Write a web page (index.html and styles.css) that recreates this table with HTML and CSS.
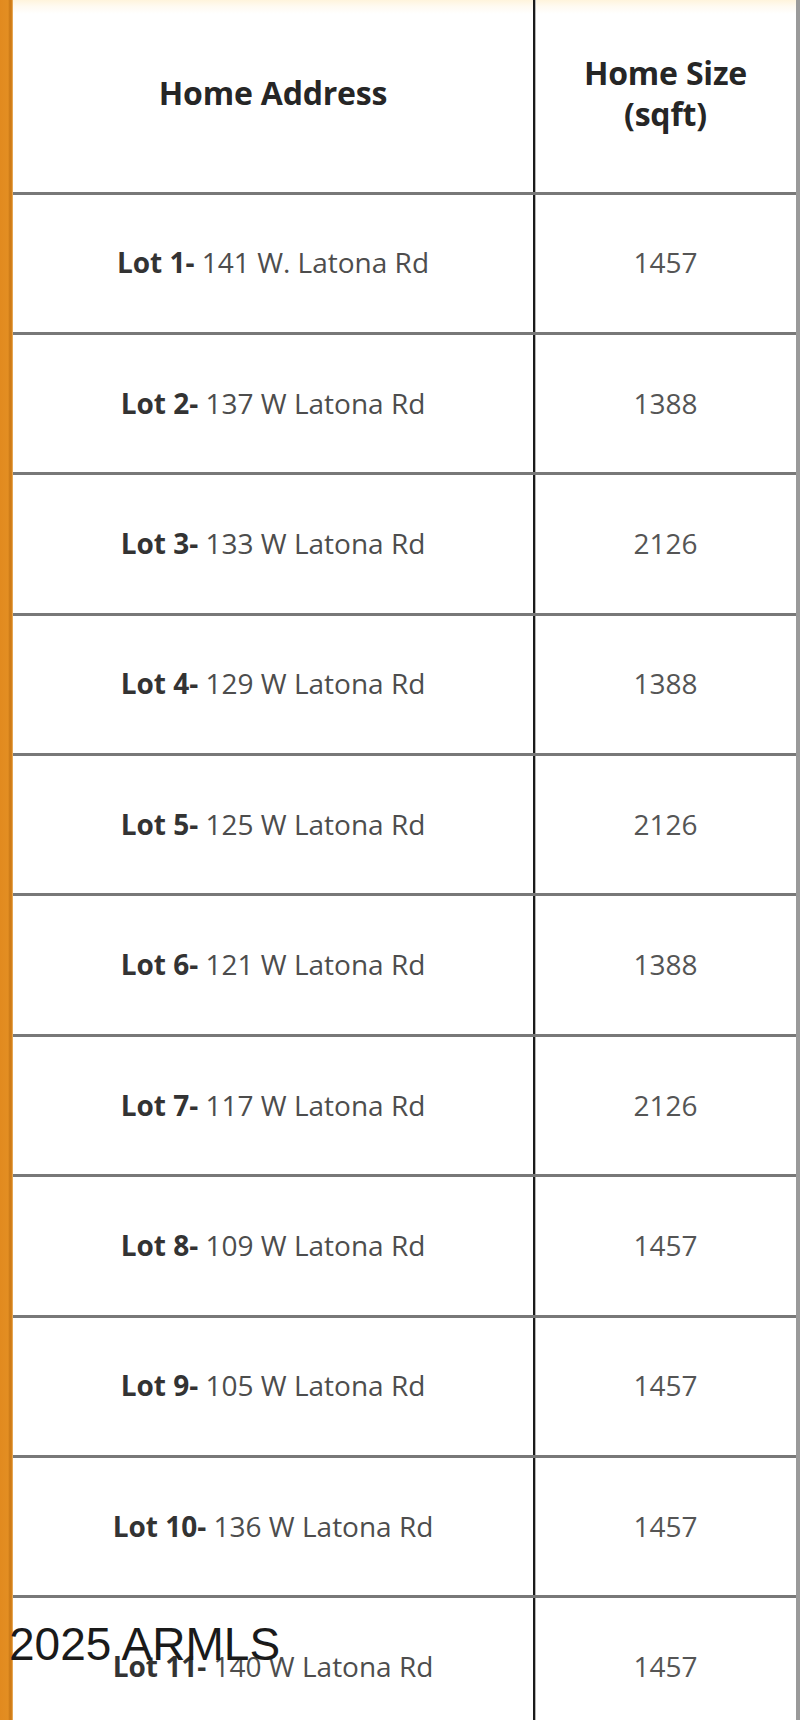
FILE: index.html
```html
<!DOCTYPE html>
<html lang="en">
<head>
<meta charset="utf-8">
<title>Home Sizes</title>
<link rel="stylesheet" href="styles.css">
</head>
<body>
<div class="page">
  <div class="accent"></div>
  <div class="table">
    <div class="row head">
      <div class="cell addr">Home Address</div>
      <div class="cell size">Home Size<br>(sqft)</div>
    </div>
    <div class="row"><div class="cell addr"><b>Lot 1-</b>&nbsp;141 W. Latona Rd</div><div class="cell size">1457</div></div>
    <div class="row"><div class="cell addr"><b>Lot 2-</b>&nbsp;137 W Latona Rd</div><div class="cell size">1388</div></div>
    <div class="row"><div class="cell addr"><b>Lot 3-</b>&nbsp;133 W Latona Rd</div><div class="cell size">2126</div></div>
    <div class="row"><div class="cell addr"><b>Lot 4-</b>&nbsp;129 W Latona Rd</div><div class="cell size">1388</div></div>
    <div class="row"><div class="cell addr"><b>Lot 5-</b>&nbsp;125 W Latona Rd</div><div class="cell size">2126</div></div>
    <div class="row"><div class="cell addr"><b>Lot 6-</b>&nbsp;121 W Latona Rd</div><div class="cell size">1388</div></div>
    <div class="row"><div class="cell addr"><b>Lot 7-</b>&nbsp;117 W Latona Rd</div><div class="cell size">2126</div></div>
    <div class="row"><div class="cell addr"><b>Lot 8-</b>&nbsp;109 W Latona Rd</div><div class="cell size">1457</div></div>
    <div class="row"><div class="cell addr"><b>Lot 9-</b>&nbsp;105 W Latona Rd</div><div class="cell size">1457</div></div>
    <div class="row"><div class="cell addr"><b>Lot 10-</b>&nbsp;136 W Latona Rd</div><div class="cell size">1457</div></div>
    <div class="row"><div class="cell addr"><b>Lot 11-</b>&nbsp;140 W Latona Rd</div><div class="cell size">1457</div></div>
  </div>
  <div class="watermark">2025 ARMLS</div>
</div>
</body>
</html>
```
FILE: styles.css
```css
* {
  box-sizing: border-box;
}

html, body {
  margin: 0;
  padding: 0;
  background: #ffffff;
}

.page {
  position: relative;
  display: flex;
  width: 800px;
  height: 1720px;
  overflow: hidden;
  font-family: "Open Sans", "Liberation Sans", sans-serif;
}

.accent {
  flex: 0 0 13px;
  background: linear-gradient(to right, #e18a1f 0, #e38e22 8px, #c97816 10px, #d9841c 12px, #f1c88e 13px);
}

.table {
  flex: 1;
  display: flex;
  flex-direction: column;
  border-right: 4px solid #9a9a9a;
}

.row {
  flex: 0 0 140.4px;
  display: flex;
  border-top: 3px solid #787878;
}

.row.head {
  flex-basis: 191.5px;
  border-top: none;
  background: linear-gradient(to bottom, #fff4dc 0, #fffaf0 6px, #ffffff 14px);
}

.cell {
  display: flex;
  align-items: center;
  justify-content: center;
  text-align: center;
}

.cell.addr {
  flex: 0 0 522px;
  border-right: 2px solid #1a1a1a;
  box-shadow: 1px 0 0 #b5b5b5;
  font-size: 28px;
  color: #4d4d4d;
  padding-bottom: 2px;
}

.cell.size {
  flex: 1;
  font-size: 28px;
  color: #555555;
  padding-bottom: 2px;
}

.cell b {
  font-weight: 700;
  color: #333333;
}

.head .cell {
  font-size: 32px;
  font-weight: 700;
  color: #262626;
  line-height: 41px;
  letter-spacing: -0.2px;
  padding-bottom: 6px;
}

.watermark {
  position: absolute;
  left: 9px;
  top: 1621px;
  font-family: "Liberation Sans", Arial, sans-serif;
  font-size: 46px;
  line-height: 46px;
  color: #1a1a1a;
  white-space: nowrap;
}
```
